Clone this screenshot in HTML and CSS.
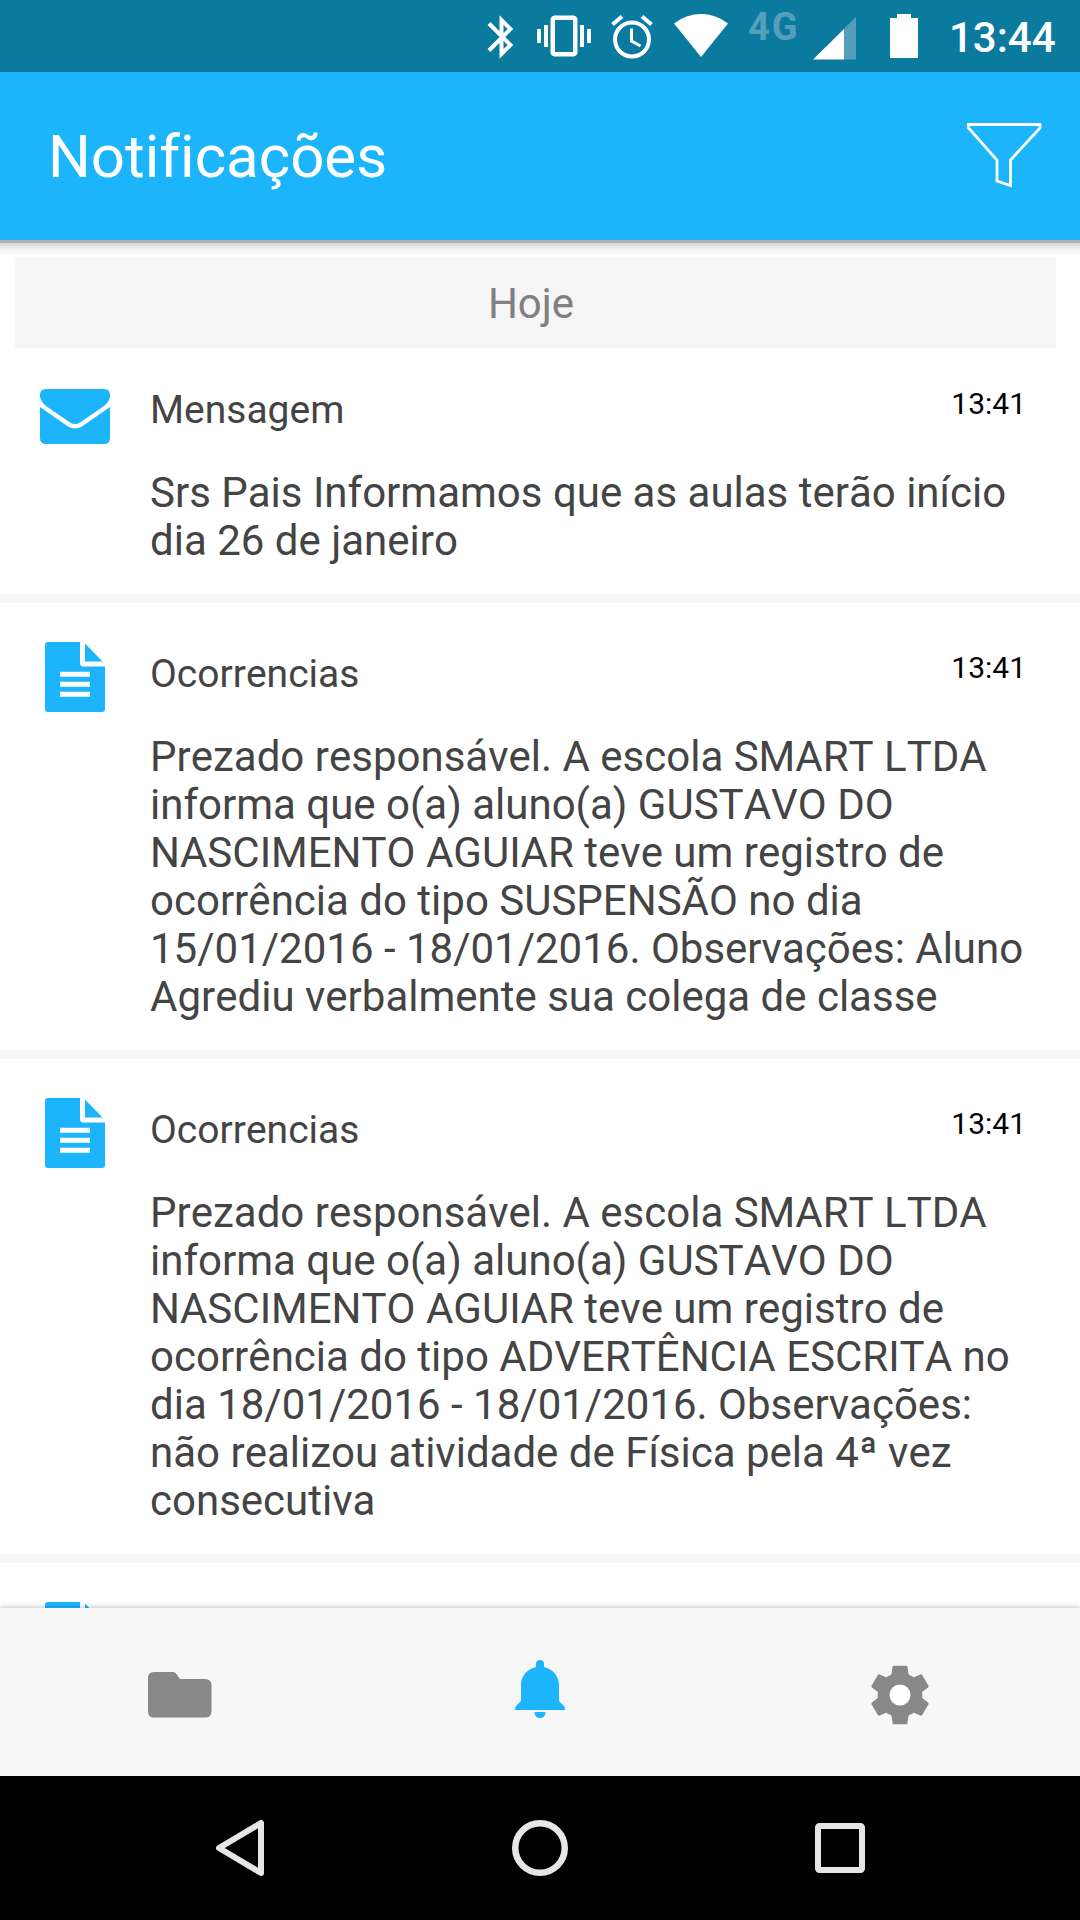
FILE: index.html
```html
<!DOCTYPE html>
<html lang="pt-BR">
<head>
<meta charset="utf-8">
<title>Notificações</title>
<link rel="stylesheet" href="styles.css">
</head>
<body>
<svg class="symbols" aria-hidden="true">
  <symbol id="doc" viewBox="0 0 60 70">
    <path fill="#1cb5fb" d="M3 0H35V21Q35 24.500 38.500 24.500H60V67Q60 70 57 70H3Q0 70 0 67V3Q0 0 3 0ZM40 1.500L57.500 19.500H40Z"/>
    <path fill="none" stroke="#fff" stroke-width="5" stroke-linecap="butt" d="M15 32.300H45M15 42.300H45M15 52.300H45"/>
  </symbol>
</svg>

<header class="status">
  <svg class="bluetooth" width="28" height="44" viewBox="0 0 28 44"><path fill="none" stroke="#fff" stroke-width="4" d="M2 8.500L23.500 30L14.500 39V5L23.500 14L2 35.500"/></svg>
  <svg class="vibrate" width="54" height="42" viewBox="0 0 54 42"><path fill="#fff" d="M0 14H4V28H0ZM7 10H11V32H7ZM43 10H47V32H43ZM50 14H54V28H50Z"/><rect x="15.750" y="2.750" width="22.500" height="36.500" rx="2" fill="none" stroke="#fff" stroke-width="4.500"/></svg>
  <svg class="alarm" width="42" height="44" viewBox="0 0 42 44"><g fill="none" stroke="#fff"><circle cx="21" cy="24.500" r="17" stroke-width="4"/><path stroke-width="4" d="M1.500 9.500L11 1.500M40.500 9.500L31 1.500"/><path stroke-width="3" d="M20.500 13.500V26L29.500 31"/></g></svg>
  <svg class="wifi" width="54" height="44" viewBox="0 0 54 44"><path fill="#fff" d="M0 9.500Q12 0 27 0T54 9.500L27 43Z"/></svg>
  <span class="network">4G</span>
  <svg class="signal" width="43" height="43" viewBox="0 0 43 43"><path fill="#569fbb" d="M43 0V42.500H31V12Z"/><path fill="#fff" d="M0 42.500L31 12V42.500Z"/></svg>
  <svg class="battery" width="28" height="44" viewBox="0 0 28 44"><path fill="#fff" d="M7 0H21V4H28V44H0V4H7Z"/></svg>
  <time class="clock">13:44</time>
</header>

<div class="appbar">
  <h1>Notificações</h1>
  <svg width="76" height="66" viewBox="0 0 76 66"><path fill="none" stroke="#fff" stroke-width="2.800" d="M2.500 2.500H74V6L44.500 38V63.500L31 59V38L2.500 6Z"/></svg>
</div>

<main class="feed">
  <h2 class="day">Hoje</h2>

  <article class="item first">
    <div class="icon"><svg width="70" height="55" viewBox="0 0 70 55"><path fill="#1cb5fb" d="M6 0H64Q70 0 70 6V8Q69 13 64 17L40 33.500Q35 36.500 30 33.500L6 17Q1 13 0 8V6Q0 0 6 0ZM0 18L28 37.500Q35 41.500 42 37.500L70 18V49Q70 55 64 55H6Q0 55 0 49Z"/></svg></div>
    <h3>Mensagem</h3>
    <time>13:41</time>
    <p>Srs Pais Informamos que as aulas terão início dia 26 de janeiro</p>
  </article>

  <article class="item">
    <div class="icon"><svg width="60" height="70"><use href="#doc"/></svg></div>
    <h3>Ocorrencias</h3>
    <time>13:41</time>
    <p>Prezado responsável. A escola SMART LTDA informa que o(a) aluno(a) GUSTAVO DO NASCIMENTO AGUIAR teve um registro de ocorrência do tipo SUSPENSÃO no dia 15/01/2016 - 18/01/2016. Observações: Aluno Agrediu verbalmente sua colega de classe</p>
  </article>

  <article class="item">
    <div class="icon"><svg width="60" height="70"><use href="#doc"/></svg></div>
    <h3>Ocorrencias</h3>
    <time>13:41</time>
    <p>Prezado responsável. A escola SMART LTDA informa que o(a) aluno(a) GUSTAVO DO NASCIMENTO AGUIAR teve um registro de ocorrência do tipo ADVERTÊNCIA ESCRITA no dia 18/01/2016 - 18/01/2016. Observações: não realizou atividade de Física pela 4ª vez consecutiva</p>
  </article>

  <article class="item">
    <div class="icon"><svg width="60" height="70"><use href="#doc"/></svg></div>
  </article>
</main>

<nav class="tabs">
  <svg width="64" height="46" viewBox="0 0 64 46"><path fill="#888" d="M6 0H25Q27 0 28.500 2L32 7H57Q63.500 7 63.500 13V39.500Q63.500 45.500 57 45.500H6Q0 45.500 0 39.500V6Q0 0 6 0Z"/></svg>
  <svg class="bell" width="50" height="58" viewBox="0 0 50 58"><path fill="#1cb5fb" d="M21 7V4Q21 0 25 0T29 4V7C38 9 44 16 44 25V41L49 46Q50 47 50 50H0Q0 47 1 46L6 41V25C6 16 12 9 21 7ZM19.500 52H30.500Q30 58 25 58T19.500 52Z"/></svg>
  <svg width="60" height="60" viewBox="-30 -30 60 60">
    <g fill="#888"><circle r="22.300"/>
      <path id="teeth" d="M-9 -17L-7.500 -28Q-7.300 -29.200 -6.300 -29.200H6.300Q7.300 -29.200 7.500 -28L9 -17V17L7.500 28Q7.300 29.200 6.300 29.200H-6.300Q-7.300 29.200 -7.500 28L-9 17Z"/>
      <use href="#teeth" transform="rotate(60)"/><use href="#teeth" transform="rotate(120)"/>
    </g>
    <circle r="10.500" fill="#fff"/>
  </svg>
</nav>

<nav class="system">
  <svg width="50" height="58" viewBox="0 0 50 58"><path fill="none" stroke="#e6e6e6" stroke-width="6" stroke-linejoin="round" d="M4 29L46 4V54Z"/></svg>
  <svg width="56" height="56" viewBox="0 0 56 56"><circle cx="28" cy="28" r="24.750" fill="none" stroke="#e6e6e6" stroke-width="6.500"/></svg>
  <svg width="50" height="50" viewBox="0 0 50 50"><rect x="3" y="3" width="44" height="44" rx="1.500" fill="none" stroke="#e6e6e6" stroke-width="6"/></svg>
</nav>
</body>
</html>
```
FILE: styles.css
```css
* { box-sizing: border-box; margin: 0; padding: 0; }
body {
  width: 1080px;
  height: 1920px;
  display: flex;
  flex-direction: column;
  overflow: hidden;
  background: #fff;
  font-family: Roboto, sans-serif;
  font-weight: 400;
  font-kerning: none;
  font-variant-ligatures: none;
}
h1, h2, h3 { font-weight: 400; }
svg { display: block; flex: none; }
.symbols { position: absolute; width: 0; height: 0; }

.status {
  height: 72px;
  flex: none;
  display: flex;
  align-items: flex-start;
  padding: 15px 24px 0 487px;
  background: #0b7a9f;
  color: #fff;
}
.vibrate { margin-left: 22px; }
.alarm { margin-left: 20px; }
.wifi { margin: -1px 0 0 21px; }
.network {
  width: 85px;
  padding-left: 20px;
  margin-top: -10px;
  font-size: 38px;
  font-weight: 700;
  line-height: 44px;
  letter-spacing: 2px;
  color: #569fbb;
  white-space: nowrap;
}
.signal { margin-top: 2px; }
.battery { margin: -1px 0 0 34px; }
.clock {
  margin: -1px 0 0 31px;
  font-size: 42px;
  font-weight: 500;
  line-height: 48px;
  white-space: nowrap;
}

.appbar {
  height: 168px;
  flex: none;
  display: flex;
  align-items: center;
  justify-content: space-between;
  padding: 1px 38px 0 48px;
  background: #1cb5fb;
  color: #fff;
}
.appbar h1 { font-size: 60px; line-height: 168px; }
.appbar svg { margin-bottom: 3px; }

.feed {
  height: 1368px;
  flex: none;
  overflow: hidden;
  padding-top: 18px;
  background: linear-gradient(#b0b0b0 0 3px, #d6d6d6 3px, #f0f0f0 9px, #fff 16px);
}
.day {
  height: 90px;
  margin: 0 24px 0 15px;
  padding: 1px 9px 0 0;
  background: #f6f6f6;
  color: #808080;
  font-size: 42px;
  line-height: 90px;
  text-align: center;
}
.item {
  display: grid;
  grid-template-columns: 150px 1fr auto;
  grid-template-rows: 130px auto;
  padding: 0 54px 29px 0;
  border-bottom: 9px solid #f7f7f7;
  color: #444;
}
.item.first { grid-template-rows: 121px auto; }
.icon { height: 70px; margin-top: 39px; display: grid; place-items: center; }
.first .icon { margin-top: 33px; }
.item h3 { font-size: 39px; line-height: 48px; padding-top: 47px; }
.item time { font-size: 30px; line-height: 48px; padding-top: 41px; color: #000; }
.first h3 { padding-top: 38px; }
.first time { padding-top: 32px; }
.item p { grid-column: 2 / 4; font-size: 42px; line-height: 48px; }

.tabs {
  height: 168px;
  flex: none;
  display: grid;
  grid-template-columns: repeat(3, 360px);
  place-items: center;
  padding-top: 6px;
  background: #f7f7f7;
  box-shadow: 0 -1px 5px rgba(0, 0, 0, .22);
}
.bell { margin-bottom: 12px; }

.system {
  height: 144px;
  flex: none;
  display: grid;
  grid-template-columns: repeat(3, 300px);
  justify-content: center;
  place-items: center;
  background: #000;
}
```
